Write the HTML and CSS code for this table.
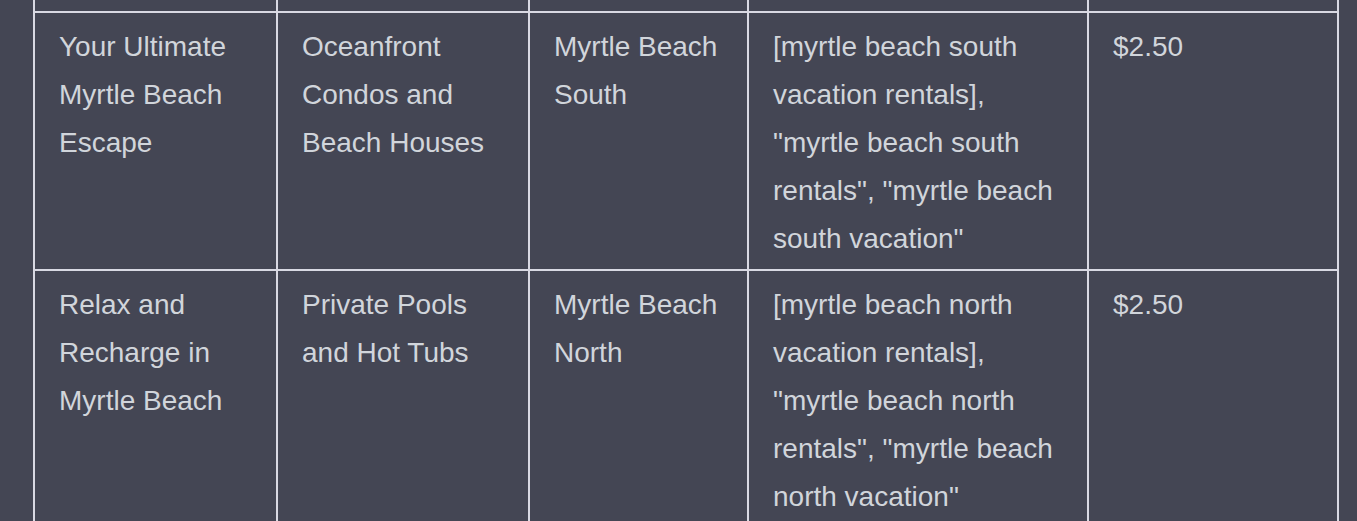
FILE: index.html
```html
<!DOCTYPE html>
<html lang="en">
<head>
<meta charset="utf-8">
<title>Myrtle Beach ads</title>
<link rel="stylesheet" href="styles.css">
</head>
<body>
<main class="page">
  <table class="ads">
    <colgroup>
      <col class="c1"><col class="c2"><col class="c3"><col class="c4"><col class="c5">
    </colgroup>
    <thead>
      <tr class="head"><th></th><th></th><th></th><th></th><th></th></tr>
    </thead>
    <tbody>
      <tr>
        <td>Your Ultimate Myrtle Beach Escape</td>
        <td>Oceanfront Condos and Beach Houses</td>
        <td>Myrtle Beach South</td>
        <td>[myrtle beach south vacation rentals], "myrtle beach south rentals", "myrtle beach south vacation"</td>
        <td>$2.50</td>
      </tr>
      <tr>
        <td>Relax and Recharge in Myrtle Beach</td>
        <td>Private Pools and Hot Tubs</td>
        <td>Myrtle Beach North</td>
        <td>[myrtle beach north vacation rentals], "myrtle beach north rentals", "myrtle beach north vacation"</td>
        <td>$2.50</td>
      </tr>
    </tbody>
  </table>
</main>
</body>
</html>
```

FILE: styles.css
```css
* { box-sizing: border-box; }

html, body {
  margin: 0;
  padding: 0;
  background: #444654;
}

body {
  font-family: "Liberation Sans", Arial, sans-serif;
  color: #d1d5db;
  overflow: hidden;
}

.page {
  padding-left: 33px;
}

.ads {
  table-layout: fixed;
  width: 1306px;
  border-collapse: separate;
  border-spacing: 0;
  border-left: 2px solid #d9d9e3;
  font-size: 28px;
  line-height: 48px;
}

.c1 { width: 243px; }
.c2 { width: 252px; }
.c3 { width: 219px; }
.c4 { width: 340px; }
.c5 { width: 250px; }

.ads th,
.ads td {
  border-right: 2px solid #d9d9e3;
  vertical-align: top;
  text-align: left;
  font-weight: 400;
}

.head th {
  height: 11px;
  padding: 0;
}

.ads td {
  border-top: 2px solid #d9d9e3;
  padding: 10px 24px 6px 24px;
}
```
